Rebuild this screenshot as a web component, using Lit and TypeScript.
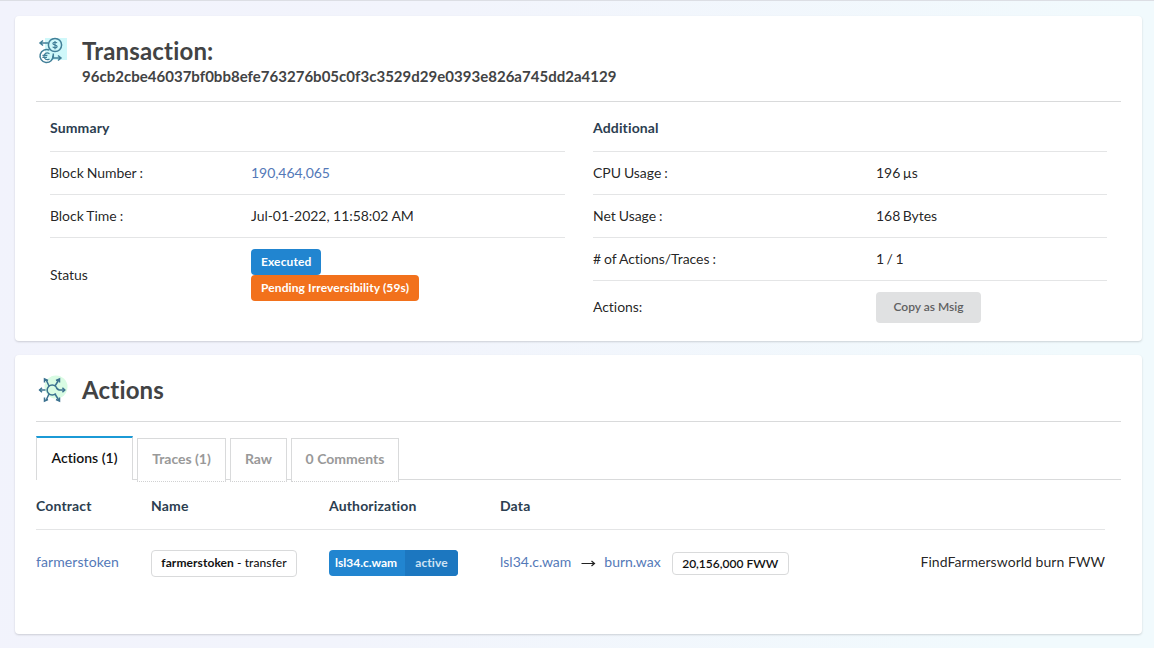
import { LitElement, html, css } from "lit";
import { customElement } from "lit/decorators.js";

@customElement("app-root")
export class AppRoot extends LitElement {
  static styles = css`
    :host {
      display: block;
      box-sizing: border-box;
      height: 648px;
      border-top: 1px solid #dcdee4;
      background: linear-gradient(100deg, #f2f3fc 0%, #f2f4fc 35%, #f1fafd 90%);
      font: 14px/20px Lato, sans-serif;
      font-variant-ligatures: none;
      color: rgba(0, 0, 0, 0.87);
      padding: 15px 12px 0 15px;
      white-space: nowrap;
      overflow: hidden;
    }
    * { box-sizing: border-box; }
    .card {
      background: #fff;
      border-radius: 4px;
      box-shadow: 0 1px 2px rgba(34, 36, 38, 0.18);
      padding: 0 21px;
    }
    .first { height: 325px; margin-bottom: 14px; }
    .second { height: 279px; }
    .head { display: flex; border-bottom: 1px solid #d9dadb; color: #424344; font-weight: 700; }
    .first .head { height: 86px; padding-top: 18px; }
    .second .head { height: 67px; padding-top: 18px; }
    .head svg { width: 32px; height: 32px; margin: 1px 14px 0 0; flex: none; }
    .title { font-size: 24px; line-height: 33px; letter-spacing: 0.18px; }
    .hash { font-size: 15px; line-height: 18px; letter-spacing: 0.02px; }
    .cols { display: grid; grid-template-columns: 515px 514px; column-gap: 28px; padding-left: 14px; }
    .row { display: flex; align-items: center; height: 43px; border-bottom: 1px solid #e4e5e6; }
    .row.top { height: 50px; padding-top: 2px; font-weight: 700; color: #2c3e50; letter-spacing: 0.14px; }
    .row.last { border: 0; }
    .left .last { height: 74px; }
    .right .last { height: 52px; }
    .key, .val { letter-spacing: -0.05px; }
    .key { word-spacing: -0.5px; }
    .left .key { width: 201px; }
    .right .key { width: 283px; }
    .right .val { word-spacing: -1px; }
    .link { color: #5479b8; }
    .stack { display: flex; flex-direction: column; align-items: flex-start; }
    .label {
      display: flex; align-items: center; height: 26px; padding: 0 10px;
      border-radius: 4px; font-size: 12px; font-weight: 700; color: #fff; background: #2185d0;
    }
    .stack .label { letter-spacing: 0.11px; padding-right: 9.8px; }
    .orange { background: #f2711c; }
    .button {
      display: flex; align-items: center; justify-content: center; width: 105px; height: 31px;
      border-radius: 4px; background: #e0e1e2; color: #5f6061; font-size: 12px; font-weight: 600;
    }
    .tabs { display: flex; align-items: flex-start; height: 45px; margin-top: 14px;
      background: linear-gradient(#d9dadb, #d9dadb) 0 43px / 100% 1px no-repeat; }
    .tab {
      display: flex; align-items: center; justify-content: center; height: 44px; margin: 2px 4px 0 0;
      padding-bottom: 2px;
      border: 1px solid #d9dadb; border-bottom: 1px dotted #d0d1d2;
      background: #fff; color: #999; font-weight: 700;
    }
    .tab.active { height: 44px; margin-top: 0; border-top: 2px solid #1b9ad6; border-bottom: 0; color: #111; font-weight: 600; }
    .t0 { width: 97px; } .t1 { width: 89px; } .t2 { width: 57px; } .t3 { width: 108px; }
    .line { display: grid; grid-template-columns: 115px 178px 171px auto; width: 1069px; align-items: center; }
    .thead { height: 49px; padding-top: 1px; border-bottom: 1px solid #e4e5e6; font-weight: 700; color: #2c3e50; letter-spacing: 0.15px; }
    .tbody { height: 65px; }
    .tbody .link, .memo { padding-bottom: 2px; }
    .contract { letter-spacing: 0.09px; }
    .pill {
      display: flex; align-items: center; justify-content: center; width: 146px; height: 27px;
      border: 1px solid #d9dadb; border-radius: 4px; font-size: 12px; font-weight: 500; color: #111;
      white-space: pre; letter-spacing: 0.08px;
      margin-top: 1px;
    }
    .pill b { font-weight: 700; }
    .amount { width: 117px; height: 23px; margin: 2px 0 0 11px; font-size: 12px; font-weight: 600; letter-spacing: 0; }
    .auth { width: 129px; padding: 0 0 0 6px; overflow: hidden; }
    .perm {
      display: flex; align-items: center; justify-content: center; width: 53px; height: 26px; margin-left: auto;
      background: #1c77c0; color: #cfe3f4; letter-spacing: 0.1px;
    }
    .data { display: flex; align-items: center; }
    .arrow { width: 15px; height: 10px; margin: 0 8px 0 10px; }
    .memo { margin-left: auto; letter-spacing: 0.04px; }
  `;

  private kv(key: string, value: unknown) {
    return html`<div class="row"><span class="key">${key}</span><span class="val">${value}</span></div>`;
  }

  render() {
    return html`
      <section class="card first">
        <header class="head">
          <svg viewBox="0 0 32 32" fill="none" stroke="#417f98" stroke-width="1.5">
            <path d="M9 3h22v22H9z" fill="#cff8fa" stroke="none" />
            <circle cx="19" cy="10" r="6.6" />
            <path d="M13.400 15.200A6.500 6.500 0 1 0 17 20.500M12 8H4m3-2.500L4 8l3 2.500" />
            <path d="M17 23h8m-3-2.500 3 2.500-3 2.500M17.300 18.500v4.500" />
            <path d="M21 8c-.6-1-4.1-1.200-4.100.6 0 1.900 4.200.9 4.200 2.900 0 1.800-3.600 1.600-4.400.3M19 5.900v8.400" stroke-width="1.2" />
            <path d="M13.500 18.700c-3-1.800-5.500 0-5.500 2.600s2.500 4.400 5.500 2.600M6.400 20.400h5M6.400 22.300h4.600" stroke-width="1.2" />
          </svg>
          <div>
            <div class="title">Transaction:</div>
            <div class="hash">96cb2cbe46037bf0bb8efe763276b05c0f3c3529d29e0393e826a745dd2a4129</div>
          </div>
        </header>
        <div class="cols">
          <div class="left">
            <div class="row top">Summary</div>
            ${this.kv("Block Number :", html`<span class="link">190,464,065</span>`)}
            ${this.kv("Block Time :", "Jul-01-2022, 11:58:02 AM")}
            <div class="row last">
              <span class="key">Status</span>
              <div class="stack">
                <span class="label">Executed</span>
                <span class="label orange">Pending Irreversibility (59s)</span>
              </div>
            </div>
          </div>
          <div class="right">
            <div class="row top">Additional</div>
            ${this.kv("CPU Usage :", "196 µs")}
            ${this.kv("Net Usage :", "168 Bytes")}
            ${this.kv("# of Actions/Traces :", "1 / 1")}
            <div class="row last"><span class="key">Actions:</span><span class="button">Copy as Msig</span></div>
          </div>
        </div>
      </section>
      <section class="card second">
        <header class="head">
          <svg viewBox="0 0 32 32" fill="none" stroke="#3c7290" stroke-width="1.5">
            <circle cx="20" cy="13" r="11.5" fill="#d9fbe3" stroke="none" />
            <path d="M19.800 12.600a5 5 0 1 0 0 6.800M20 12.500q1 3.500 3.500 3.500H29M13 12 10 5.500M19 12l4-6.500M13 20l-3 6.500M19 20l4 6.500M9.500 16H3.500" />
            <path d="M8.500 8.500V5l3.500 1.500M20 6.500 23.500 5v3.500M8.500 23.500V27l3.500-1.500M20 25.500l3.500 1.500v-3.500M6 13.800 3.600 16 6 18.200M26.400 13.800 28.800 16l-2.400 2.200" />
          </svg>
          <div class="title">Actions</div>
        </header>
        <nav class="tabs">
          <span class="tab active t0">Actions (1)</span>
          <span class="tab t1">Traces (1)</span>
          <span class="tab t2">Raw</span>
          <span class="tab t3">0 Comments</span>
        </nav>
        <div class="line thead"><span>Contract</span><span>Name</span><span>Authorization</span><span>Data</span></div>
        <div class="line tbody">
          <span class="link contract">farmerstoken</span>
          <span class="pill"><b>farmerstoken</b> - transfer</span>
          <span class="label auth">lsl34.c.wam<span class="perm">active</span></span>
          <div class="data">
            <span class="link">lsl34.c.wam</span>
            <svg class="arrow" viewBox="0 0 15 10" fill="none" stroke="#222" stroke-width="1.2"><path d="M0.500 5.500H13M10.500 3l3 2.500-3 2.500" /></svg>
            <span class="link">burn.wax</span>
            <span class="pill amount">20,156,000 FWW</span>
            <span class="memo">FindFarmersworld burn FWW</span>
          </div>
        </div>
      </section>
    `;
  }
}
